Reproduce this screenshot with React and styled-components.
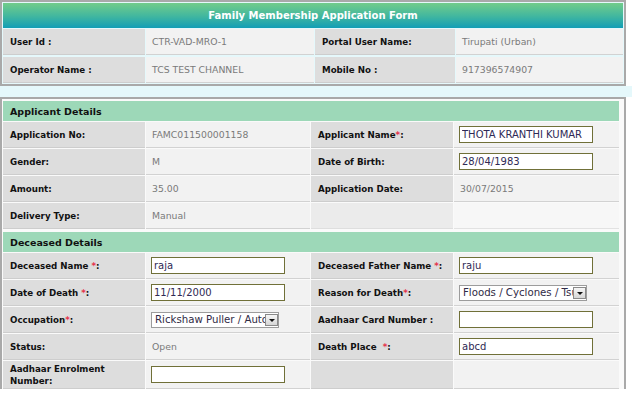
import React from 'react';
import styled, { createGlobalStyle } from 'styled-components';

const GlobalStyle = createGlobalStyle`
  html, body { margin: 0; padding: 0; background: #fff; }
  body { font-family: "DejaVu Sans", Verdana, sans-serif; }
`;

const Page = styled.div`
  width: 632px;
`;

const TopBox = styled.div`
  width: 626px;
  box-sizing: border-box;
  border: 2px solid #a9a9a9;
  background: #e5f8fb;
  padding: 1px;
`;

const Title = styled.div`
  height: 25px;
  display: flex;
  align-items: center;
  justify-content: center;
  background: linear-gradient(to bottom, #72cc8a 0%, #44b89e 50%, #129eb6 100%);
  color: #fff;
  font-weight: bold;
  font-size: 10px;
`;

const InfoGrid = styled.div`
  display: grid;
  grid-template-columns: 142px 168px 140px 1fr;
  grid-auto-rows: 26px;
  column-gap: 1px;
  row-gap: 2px;
  margin-top: 1px;
`;

const Spacer = styled.div`
  height: 11px;
  background: #e5f8fb;
`;

const FormBox = styled.div`
  width: 626px;
  box-sizing: border-box;
  border: 2px solid #a9a9a9;
  border-bottom: none;
  background: #fafafa;
  padding: 2px 5px 0 1px;
  display: flex;
  flex-direction: column;
  gap: 3px;
`;

const SectionHead = styled.div`
  height: 20px;
  display: flex;
  align-items: center;
  padding-left: 7px;
  background: #9dd8b8;
  color: #111;
  font-weight: bold;
  font-size: 9.5px;
`;

const FormGrid = styled.div`
  display: grid;
  grid-template-columns: 142px 164px 142px 1fr;
  grid-template-rows: ${p => p.$rows};
  column-gap: 1px;
  row-gap: 1px;
  margin-top: 1px;
`;

const Label = styled.div`
  display: flex;
  align-items: center;
  box-sizing: border-box;
  padding: 0 6px 0 7px;
  background: ${p => (p.$faded ? '#ebebeb' : '#dddddd')};
  border-bottom: 1px solid ${p => (p.$faded ? '#dedede' : '#cdcdcd')};
  font-size: 8.7px;
  font-weight: bold;
  line-height: 12px;
  color: #111;
`;

const LabelText = styled.div`
  display: block;
`;

const Value = styled.div`
  display: flex;
  align-items: center;
  box-sizing: border-box;
  padding: 0 5px 0 ${p => p.$pad ?? 6}px;
  background: ${p => (p.$faded ? '#f7f7f7' : '#f2f2f2')};
  border-bottom: 1px solid ${p => (p.$faded ? '#e2e2e2' : '#d2d2d2')};
  font-size: 9.3px;
  color: #7a7a7a;
`;

const Req = styled.span`
  color: #e5334b;
`;

const TextInput = styled.input`
  width: 134px;
  height: 17px;
  box-sizing: border-box;
  margin: 0;
  border: 1px solid #707038;
  padding: 0 2px;
  font-family: "DejaVu Sans", Verdana, sans-serif;
  font-size: 10px;
  color: #2f2a55;
  background: #fff;
  outline: none;
`;

const Select = styled.div`
  width: 128px;
  height: 16px;
  box-sizing: border-box;
  border: 1px solid #9c9c9c;
  background: #fff;
  display: flex;
  align-items: stretch;
  font-size: 10.2px;
  color: #2f2a45;
`;

const SelectText = styled.span`
  flex: 1;
  overflow: hidden;
  white-space: nowrap;
  padding-left: 3px;
  line-height: 14px;
`;

const SelectArrow = styled.span`
  width: 13px;
  box-sizing: border-box;
  margin: 1px 0 1px 0;
  border: 1px solid #8a8a8a;
  background: linear-gradient(to bottom, #f6f6f6, #d6d6d6);
  display: flex;
  align-items: flex-end;
  justify-content: center;
  padding-bottom: 3px;
  &::after {
    content: "";
    width: 0;
    height: 0;
    border-left: 3px solid transparent;
    border-right: 3px solid transparent;
    border-top: 3px solid #111;
  }
`;

const info = [
  ['User Id :', 'CTR-VAD-MRO-1', 'Portal User Name:', 'Tirupati (Urban)'],
  ['Operator Name :', 'TCS TEST CHANNEL', 'Mobile No :', '917396574907'],
];

function Field({ label, req, sep = '', children, pad, faded }) {
  return (
    <>
      <Label $faded={faded}>
        <LabelText>
          {label}
          {req && (
            <>
              {sep}
              <Req>*</Req>
            </>
          )}
          {label ? ':' : ''}
        </LabelText>
      </Label>
      <Value $pad={pad} $faded={faded}>
        {children}
      </Value>
    </>
  );
}

function Dropdown({ text }) {
  return (
    <Select>
      <SelectText>{text}</SelectText>
      <SelectArrow />
    </Select>
  );
}

export default function App() {
  return (
    <Page>
      <GlobalStyle />
      <TopBox>
        <Title>Family Membership Application Form</Title>
        <InfoGrid>
          {info.map((r, i) => (
            <React.Fragment key={i}>
              <Label>{r[0]}</Label>
              <Value>{r[1]}</Value>
              <Label>{r[2]}</Label>
              <Value>{r[3]}</Value>
            </React.Fragment>
          ))}
        </InfoGrid>
      </TopBox>
      <Spacer />
      <FormBox>
        <div>
          <SectionHead>Applicant Details</SectionHead>
          <FormGrid $rows="repeat(4, 26px)">
            <Field label="Application No">FAMC011500001158</Field>
            <Field label="Applicant Name" req pad={5}>
              <TextInput defaultValue="THOTA KRANTHI KUMAR" />
            </Field>
            <Field label="Gender">M</Field>
            <Field label="Date of Birth" pad={5}>
              <TextInput defaultValue="28/04/1983" />
            </Field>
            <Field label="Amount">35.00</Field>
            <Field label="Application Date">30/07/2015</Field>
            <Field label="Delivery Type">Manual</Field>
            <Field label="" faded />
          </FormGrid>
        </div>
        <div>
          <SectionHead>Deceased Details</SectionHead>
          <FormGrid $rows="repeat(4, 26px) 28px">
            <Field label="Deceased Name" req sep={'\u00a0'} pad={5}>
              <TextInput defaultValue="raja" />
            </Field>
            <Field label="Deceased Father Name" req sep={'\u00a0'} pad={5}>
              <TextInput defaultValue="raju" />
            </Field>
            <Field label="Date of Death" req sep={'\u00a0'} pad={5}>
              <TextInput defaultValue="11/11/2000" />
            </Field>
            <Field label="Reason for Death" req pad={5}>
              <Dropdown text="Floods / Cyclones / Tsunami" />
            </Field>
            <Field label="Occupation" req pad={5}>
              <Dropdown text="Rickshaw Puller / Auto Driver" />
            </Field>
            <Field label="Aadhaar Card Number " pad={5}>
              <TextInput defaultValue="" />
            </Field>
            <Field label="Status">Open</Field>
            <Field label="Death Place" req sep={'\u00a0\u00a0'} pad={5}>
              <TextInput defaultValue="abcd" />
            </Field>
            <Field label="Aadhaar Enrolment Number" pad={5}>
              <TextInput defaultValue="" />
            </Field>
            <Field label="" />
          </FormGrid>
        </div>
      </FormBox>
    </Page>
  );
}
